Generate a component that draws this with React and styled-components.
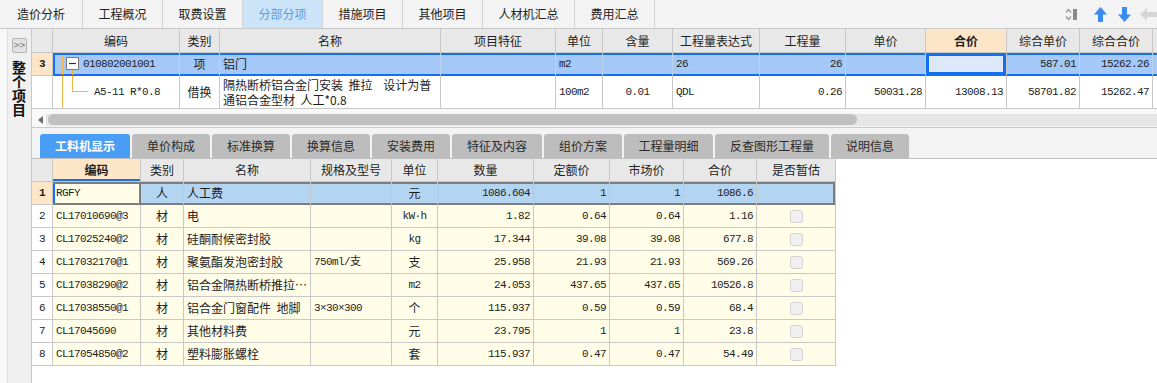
import React from 'react';
import styled, { createGlobalStyle, css } from 'styled-components';

const CJK = `"Noto Sans CJK SC", "Noto Sans", sans-serif`;
const MONO = `"Liberation Mono", "Noto Sans CJK SC", monospace`;
const GRID = '#c8c8c8';
const BLUE = '#1570ef';
const PEACH = '#fde6c8';

const GlobalStyle = createGlobalStyle`
  html, body { margin: 0; padding: 0; background: #fff; }
  body { font-family: ${CJK}; font-size: 12px; color: #222; }
  * { box-sizing: border-box; }
`;

const Root = styled.div`
  width: 1157px;
  height: 383px;
  display: flex;
  flex-direction: column;
  overflow: hidden;
  background: #fff;
`;

/* ---------- top bar ---------- */
const TopBar = styled.div`
  height: 29px;
  flex: none;
  display: flex;
  background: #f3f3f3;
  border-bottom: 1px solid ${GRID};
`;
const TopTab = styled.div`
  width: ${(p) => p.$w}px;
  display: flex;
  align-items: center;
  justify-content: center;
  border-right: 1px solid #d4d4d4;
  font-size: 12px;
  line-height: 1;
  color: ${(p) => (p.$active ? '#5a9de6' : '#222')};
  background: ${(p) => (p.$active ? '#cce4f7' : 'transparent')};
`;
const ToolIcons = styled.div`
  margin-left: auto;
  display: flex;
  align-items: center;
  padding-top: 1px;
`;
const IconSlot = styled.span`
  display: inline-flex;
  margin-left: ${(p) => p.$ml}px;
`;

/* ---------- main ---------- */
const Main = styled.div`
  flex: 1;
  display: flex;
  min-height: 0;
`;
const Sidebar = styled.div`
  width: 32px;
  flex: none;
  display: flex;
  border-right: 1px solid ${GRID};
`;
const SideEdge = styled.div`
  width: 8px;
  background: #f8f8f8;
  border-right: 1px solid #dedede;
`;
const SideBody = styled.div`
  flex: 1;
  background: #f0f0f0;
  display: flex;
  flex-direction: column;
  align-items: center;
  padding-top: 9px;
  padding-right: 1px;
`;
const ExpandBtn = styled.div`
  width: 15px;
  height: 15px;
  border: 1px solid #b4b4b4;
  border-radius: 2px;
  background: #e2e2e2;
  color: #777;
  font-family: "DejaVu Sans", sans-serif;
  font-size: 8px;
  line-height: 13px;
  text-align: center;
  letter-spacing: -1px;
`;
const VerticalTitle = styled.div`
  margin-top: 8px;
  writing-mode: vertical-rl;
  text-orientation: upright;
  font-size: 14px;
  line-height: 14px;
  font-weight: 700;
  color: #111;
`;

const Content = styled.div`
  flex: 1;
  display: flex;
  flex-direction: column;
  min-width: 0;
`;

/* ---------- grid rows ---------- */
const Row = styled.div`
  display: grid;
  grid-template-columns: ${(p) => p.$cols};
  height: ${(p) => p.$h}px;
  flex: none;
`;

const Cell = styled.div`
  border-right: 1px solid ${GRID};
  border-bottom: 1px solid ${GRID};
  display: flex;
  align-items: center;
  justify-content: ${(p) =>
    p.$align === 'right' ? 'flex-end' : p.$align === 'center' ? 'center' : 'flex-start'};
  padding: 0 ${(p) => (p.$pad != null ? p.$pad : 3)}px;
  overflow: hidden;
  white-space: nowrap;
  background: ${(p) => p.$bg || 'transparent'};
  font-family: ${(p) => (p.$mono ? MONO : CJK)};
  font-size: ${(p) => (p.$mono ? '11px' : '12px')};
  letter-spacing: ${(p) => (p.$mono ? '-0.6px' : '0')};
  font-weight: ${(p) => (p.$bold ? 700 : 400)};
  line-height: 14px;
  color: #1e1e1e;
  ${(p) => p.$wrap && css`white-space: pre; align-items: flex-start; padding-top: 2px; line-height: 14.5px;`}
`;

const PlainText = styled.span`
  font-family: ${(p) => (p.$mono ? MONO : CJK)};
  font-size: ${(p) => (p.$mono ? '11px' : '12px')};
  letter-spacing: ${(p) => (p.$mono ? '-0.6px' : '0')};
`;

const HeadCell = styled(Cell)`
  background: ${(p) => p.$bg || '#e8e8e8'};
  justify-content: center;
  font-family: ${CJK};
  font-size: 12px;
  letter-spacing: 0;
  ${(p) => p.$underline && css`box-shadow: inset 0 -2px 0 ${BLUE};`}
`;

const UCell = styled(Cell)`
  ${(p) => p.$sel && css`
    background: #a4c8f7;
    border-right-color: #bcd3ee;
    border-bottom-color: ${BLUE};
    box-shadow: inset 0 2px 0 ${BLUE}, inset 0 -1px 0 ${BLUE} ${p.$selStart ? `, inset 2px 0 0 ${BLUE}` : ''};
  `}
  ${(p) => p.$focus && css`
    background: #dde9fb;
    border-bottom-color: ${BLUE};
    box-shadow: inset 0 0 0 3px ${BLUE};
  `}
`;

const LCell = styled(Cell)`
  background: ${(p) => p.$bg || '#fffde8'};
  ${(p) => p.$sel && css`
    background: #b4d5f2;
    border-bottom-color: #7d7d7d;
    box-shadow: inset 0 2px 0 #7d7d7d, inset 0 -1px 0 #7d7d7d ${p.$selEnd ? ', inset -2px 0 0 #7d7d7d' : ''};
  `}
  ${(p) => p.$focus && css`
    background: #fffde8;
    border-right-color: #7d7d7d;
    border-bottom-color: #7d7d7d;
    box-shadow: inset 0 2px 0 #7d7d7d, inset 0 -1px 0 #7d7d7d, inset -1px 0 0 #7d7d7d, inset 2px 0 0 ${BLUE};
  `}
  ${(p) => p.$pre && css`white-space: pre;`}
`;

const CodeCell = styled(UCell)`
  padding: 0;
`;

/* ---------- upper panel ---------- */
const UpperPanel = styled.div`
  height: 98px;
  flex: none;
  display: flex;
  flex-direction: column;
  overflow: hidden;
  background: #f8f8f8;
`;
const UpperRows = styled.div`
  background: #fff;
  width: 1200px;
`;
const ScrollRow = styled.div`
  flex: 1;
  display: flex;
  align-items: center;
  padding: 3px 0 0 6px;
`;
const ScrollArrow = styled.div`
  width: 0;
  height: 0;
  border-top: 4px solid transparent;
  border-bottom: 4px solid transparent;
  border-right: 5px solid #6a6a6a;
  margin-right: 3px;
`;
const ScrollTrack = styled.div`
  flex: 1;
  height: 12px;
  background: #e6e6e6;
  display: flex;
  align-items: center;
  padding-left: 2px;
`;
const ScrollThumb = styled.div`
  width: 809px;
  height: 11px;
  border-radius: 6px;
  background: #c1c1c1;
`;

/* ---------- lower panel ---------- */
const LowerPanel = styled.div`
  flex: 1;
  display: flex;
  flex-direction: column;
  border-top: 1px solid ${GRID};
  min-height: 0;
`;
const TabStrip = styled.div`
  height: 31px;
  flex: none;
  display: flex;
  align-items: flex-end;
  gap: 2px;
  padding-left: 8px;
  background: #f3f3f3;
  border-bottom: 1px solid #c0c0c0;
`;
const SubTab = styled.div`
  width: ${(p) => p.$w}px;
  height: 24px;
  border-radius: 3px 3px 0 0;
  display: flex;
  align-items: center;
  justify-content: center;
  font-size: 12px;
  line-height: 1;
  background: ${(p) => (p.$active ? '#4a9df5' : '#bdbdbd')};
  color: ${(p) => (p.$active ? '#fff' : '#2a2a2a')};
  font-weight: ${(p) => (p.$active ? 700 : 400)};
`;
const LowerBody = styled.div`
  flex: 1;
  background: #fff;
`;
const LowerTable = styled.div`
  width: 804px;
`;
const CheckBox = styled.span`
  width: 13px;
  height: 13px;
  border: 1px solid #d4d4d4;
  border-radius: 3px;
  background: #f0f0f0;
`;

/* ---------- icons ---------- */
const SortIcon = () => (
  <svg width="13" height="13" viewBox="0 0 13 13">
    <path d="M1 4.5 L3.5 1.5 L6 4.5" fill="none" stroke="#9a9a9a" strokeWidth="1.4" />
    <path d="M1 8.5 L3.5 11.5 L6 8.5" fill="none" stroke="#9a9a9a" strokeWidth="1.4" />
    <rect x="8" y="1" width="4" height="11" fill="#8a8a8a" />
  </svg>
);
const UpArrow = ({ down }) => (
  <svg width="13" height="15" viewBox="0 0 13 15" style={down ? { transform: 'rotate(180deg)' } : undefined}>
    <path d="M6.5 0 L13 7.5 L9 7.5 L9 15 L4 15 L4 7.5 L0 7.5 Z" fill="#3a8cf0" />
  </svg>
);
const LeftArrow = () => (
  <svg width="17" height="13" viewBox="0 0 17 13">
    <path d="M0 6.5 L7 0 L7 4 L17 4 L17 9 L7 9 L7 13 Z" fill="#d6d6d6" />
  </svg>
);

const UTree1 = () => (
  <svg width="30" height="22" viewBox="0 0 30 22">
    <line x1="9.5" y1="2" x2="9.5" y2="22" stroke="#f4b347" />
    <line x1="19.5" y1="17" x2="19.5" y2="22" stroke="#f4b347" />
    <rect x="13.5" y="4.5" width="12" height="12" fill="#fff" stroke="#7a7a7a" />
    <line x1="16" y1="10.5" x2="23" y2="10.5" stroke="#333" strokeWidth="1.2" />
  </svg>
);
const UTree2 = () => (
  <svg width="41" height="32" viewBox="0 0 41 32">
    <line x1="9.5" y1="0" x2="9.5" y2="32" stroke="#f4b347" />
    <line x1="19.5" y1="0" x2="19.5" y2="16" stroke="#f4b347" />
    <line x1="19.5" y1="15.5" x2="35" y2="15.5" stroke="#f4b347" />
  </svg>
);

/* ---------- data ---------- */
const topTabs = [
  ['造价分析', 83], ['工程概况', 80], ['取费设置', 80], ['分部分项', 80, true],
  ['措施项目', 80], ['其他项目', 80], ['人材机汇总', 92], ['费用汇总', 80],
];
const subTabs = [
  ['工料机显示', 90, true], ['单价构成', 78], ['标准换算', 78], ['换算信息', 78], ['安装费用', 78],
  ['特征及内容', 90], ['组价方案', 78], ['工程量明细', 89], ['反查图形工程量', 114], ['说明信息', 78],
];

const upperCols = '21px 127px 40px 221px 115px 47px 70px 87px 86px 80px 81px 73px 73px 60px';
const upperHead = ['', '编码', '类别', '名称', '项目特征', '单位', '含量', '工程量表达式', '工程量', '单价', '合价', '综合单价', '综合合价', ''];
const longName = '隔热断桥铝合金门安装  推拉    设计为普\n通铝合金型材  人工*0.8';

const lowerCols = '21px 88px 43px 127px 81px 46px 96px 76px 74px 73px 79px';
const lowerHead = ['', '编码', '类别', '名称', '规格及型号', '单位', '数量', '定额价', '市场价', '合价', '是否暂估'];
const lowerRows = [
  ['RGFY', '人', '人工费', '', '元', '1086.604', '1', '1', '1086.6'],
  ['CL17010690@3', '材', '电', '', 'kW·h', '1.82', '0.64', '0.64', '1.16'],
  ['CL17025240@2', '材', '硅酮耐候密封胶', '', 'kg', '17.344', '39.08', '39.08', '677.8'],
  ['CL17032170@1', '材', '聚氨酯发泡密封胶', '750ml/支', '支', '25.958', '21.93', '21.93', '569.26'],
  ['CL17038290@2', '材', '铝合金隔热断桥推拉…', '', 'm2', '24.053', '437.65', '437.65', '10526.8'],
  ['CL17038550@1', '材', '铝合金门窗配件  地脚', '3×30×300', '个', '115.937', '0.59', '0.59', '68.4'],
  ['CL17045690', '材', '其他材料费', '', '元', '23.795', '1', '1', '23.8'],
  ['CL17054850@2', '材', '塑料膨胀螺栓', '', '套', '115.937', '0.47', '0.47', '54.49'],
];
const isMonoUnit = (u) => /^[A-Za-z0-9·]+$/.test(u);

export default function App() {
  return (
    <Root>
      <GlobalStyle />
      <TopBar>
        {topTabs.map(([t, w, a]) => (
          <TopTab key={t} $w={w} $active={a}>{t}</TopTab>
        ))}
        <ToolIcons>
          <IconSlot $ml={0}><SortIcon /></IconSlot>
          <IconSlot $ml={16}><UpArrow /></IconSlot>
          <IconSlot $ml={11}><UpArrow down /></IconSlot>
          <IconSlot $ml={9}><LeftArrow /></IconSlot>
        </ToolIcons>
      </TopBar>

      <Main>
        <Sidebar>
          <SideEdge />
          <SideBody>
            <ExpandBtn>&gt;&gt;</ExpandBtn>
            <VerticalTitle>整个项目</VerticalTitle>
          </SideBody>
        </Sidebar>

        <Content>
          <UpperPanel>
            <UpperRows>
              <Row $cols={upperCols} $h={24}>
                {upperHead.map((h, i) => (
                  <HeadCell key={i} $bg={i === 10 ? PEACH : undefined} $bold={i === 10}>{h}</HeadCell>
                ))}
              </Row>
              <Row $cols={upperCols} $h={23}>
                <UCell $bg={PEACH} $align="center" $bold $mono $pad={0}>3</UCell>
                <CodeCell $sel $selStart>
                  <UTree1 />
                  <PlainText $mono>010802001001</PlainText>
                </CodeCell>
                <UCell $sel $align="center">项</UCell>
                <UCell $sel>铝门</UCell>
                <UCell $sel />
                <UCell $sel $mono>m2</UCell>
                <UCell $sel />
                <UCell $sel $mono>26</UCell>
                <UCell $sel $mono $align="right">26</UCell>
                <UCell $sel />
                <UCell $focus />
                <UCell $sel $mono $align="right">587.01</UCell>
                <UCell $sel $mono $align="right">15262.26</UCell>
                <UCell $sel />
              </Row>
              <Row $cols={upperCols} $h={33}>
                <UCell />
                <CodeCell>
                  <UTree2 />
                  <PlainText $mono>A5-11 R*0.8</PlainText>
                </CodeCell>
                <UCell $align="center">借换</UCell>
                <UCell $wrap>{longName}</UCell>
                <UCell />
                <UCell $mono>100m2</UCell>
                <UCell $mono $align="center">0.01</UCell>
                <UCell $mono>QDL</UCell>
                <UCell $mono $align="right">0.26</UCell>
                <UCell $mono $align="right">50031.28</UCell>
                <UCell $mono $align="right">13008.13</UCell>
                <UCell $mono $align="right">58701.82</UCell>
                <UCell $mono $align="right">15262.47</UCell>
                <UCell />
              </Row>
            </UpperRows>
            <ScrollRow>
              <ScrollArrow />
              <ScrollTrack>
                <ScrollThumb />
              </ScrollTrack>
            </ScrollRow>
          </UpperPanel>

          <LowerPanel>
            <TabStrip>
              {subTabs.map(([t, w, a]) => (
                <SubTab key={t} $w={w} $active={a}>{t}</SubTab>
              ))}
            </TabStrip>
            <LowerBody>
              <LowerTable>
                <Row $cols={lowerCols} $h={23}>
                  {lowerHead.map((h, i) => (
                    <HeadCell key={i} $bg={i === 1 ? PEACH : undefined} $bold={i === 1} $underline={i === 1}>{h}</HeadCell>
                  ))}
                </Row>
                {lowerRows.map((r, idx) => {
                  const sel = idx === 0;
                  return (
                    <Row key={idx} $cols={lowerCols} $h={23}>
                      <LCell $bg={sel ? PEACH : '#fff'} $align="center" $mono $bold={sel} $pad={0}>{idx + 1}</LCell>
                      <LCell $mono $focus={sel}>{r[0]}</LCell>
                      <LCell $sel={sel} $align="center">{r[1]}</LCell>
                      <LCell $sel={sel} $pre>{r[2]}</LCell>
                      <LCell $sel={sel} $mono={/^[0-9]/.test(r[3])}>{r[3]}</LCell>
                      <LCell $sel={sel} $align="center" $mono={isMonoUnit(r[4])}>{r[4]}</LCell>
                      <LCell $sel={sel} $mono $align="right">{r[5]}</LCell>
                      <LCell $sel={sel} $mono $align="right">{r[6]}</LCell>
                      <LCell $sel={sel} $mono $align="right">{r[7]}</LCell>
                      <LCell $sel={sel} $mono $align="right">{r[8]}</LCell>
                      <LCell $sel={sel} $selEnd={sel} $align="center">{!sel && <CheckBox />}</LCell>
                    </Row>
                  );
                })}
              </LowerTable>
            </LowerBody>
          </LowerPanel>
        </Content>
      </Main>
    </Root>
  );
}
